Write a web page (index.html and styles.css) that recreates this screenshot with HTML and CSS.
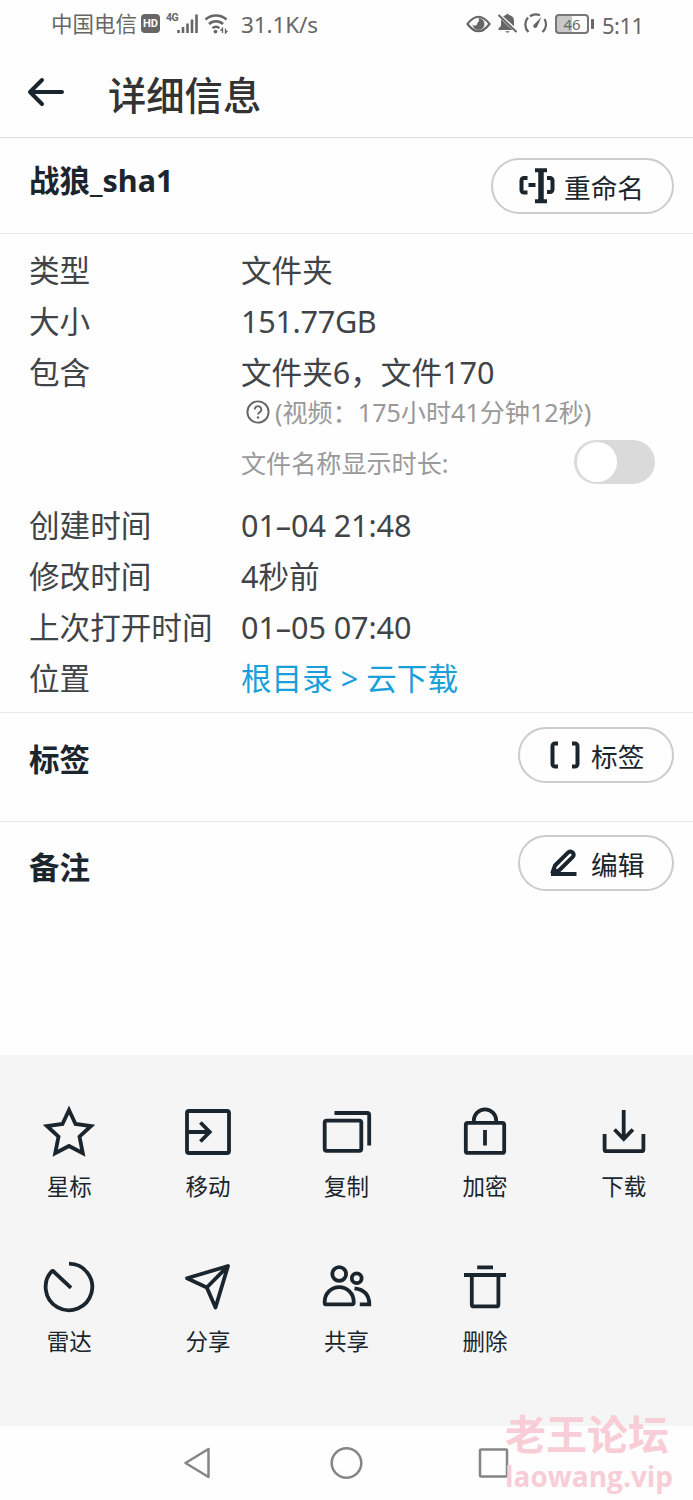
FILE: index.html
```html
<!DOCTYPE html>
<html lang="zh-CN">
<head>
<meta charset="utf-8">
<title>详细信息</title>
<link rel="stylesheet" href="styles.css">
</head>
<body>
<div class="screen">
  <div class="status">
    <span class="carrier">中国电信</span>
    <span class="hd">HD</span>
    <span class="net">4G</span>
    <svg class="signal" width="21" height="20" viewBox="0 0 21 20"><path d="M1.500 19v-3M6 19V13M10.500 19V9.500M15 19V5.500M19.500 19V0.500" stroke-width="2.600"/></svg>
    <svg class="wifi" width="25" height="20" viewBox="0 0 25 20"><path d="M1.500 5.500a15.500 15.500 0 0 1 21 0M5 10a10 10 0 0 1 14 0M8.500 14.200a5.200 5.200 0 0 1 7 0" stroke-width="2.500"/><circle class="solid" cx="11.500" cy="17.600" r="1.900"/><path d="M18.500 19v-4.500l-2 2.200M21.500 14.500V19l2-2.200" stroke-width="1.300"/></svg>
    <span class="speed">31.1K/s</span>
    <svg class="eye" width="25" height="18" viewBox="0 0 25 18"><path d="M1.500 9Q12.500-5.500 23.500 9 12.500 23.500 1.500 9z" stroke-width="2.200"/><path class="solid" d="M12.500 3a6 6 0 1 1-6 6 2.600 2.600 0 0 0 5-1.200A4 4 0 0 0 12.500 3z"/></svg>
    <svg class="bell" width="21" height="21" viewBox="0 0 21 21"><path class="solid" d="M6 3.200 9 2Q10.500-.5 12 2 17 3 17 8v5.300zM4 6.200 15.500 17H1.500v-1.500L4 12.800zM8 18.300h5Q10.500 21 8 18.300z"/><path d="M1.500 2 19.500 19" stroke-width="2"/></svg>
    <svg class="gauge" width="25" height="21" viewBox="0 0 25 21"><path d="M5 18.500A10.500 10.500 0 0 1 5 4.500M7 3.200A10.500 10.500 0 0 1 17 2.300M21.500 6a10.500 10.500 0 0 1-1.500 12.500M3 16l2.500 3M22 16l-2.500 3" stroke-width="2.300"/><path class="solid" d="M18.500 4 14 14a2 2 0 0 1-3.500-2z"/></svg>
    <span class="battery">46</span><i class="cap"></i>
    <span class="clock">5:11</span>
  </div>

  <header class="header">
    <svg class="ink" width="38" height="30" viewBox="0 0 38 30"><path d="M35 15H3M15 3 3 15l12 12" stroke-width="4" stroke-linecap="round" stroke-linejoin="round"/></svg>
    <h1 class="title">详细信息</h1>
  </header>

  <section class="section name">
    <h2 class="heading">战狼_sha1</h2>
    <button class="pill"><svg class="ink" width="38" height="38" viewBox="0 0 38 38"><path d="M16 3.200h12M16 34.300h12M9.500 18h7M8.500 11H5a2.500 2.500 0 0 0-2.500 2.500v9A2.500 2.500 0 0 0 5 25.500h3.500M28 11h3a2.500 2.500 0 0 1 2.500 2.500v9a2.500 2.500 0 0 1-2.500 2.500h-3" stroke-width="4"/><path d="M22 3v31" stroke-width="5.500"/></svg><span>重命名</span></button>
  </section>

  <section class="details">
    <div class="row"><span class="label">类型</span><span>文件夹</span></div>
    <div class="row"><span class="label">大小</span><span class="size">151.77GB</span></div>
    <div class="row"><span class="label">包含</span><span>文件夹6，文件170</span></div>
    <div class="extra">
      <div class="video"><svg width="26" height="26" viewBox="0 0 26 26"><circle cx="13" cy="13" r="10.600" stroke-width="1.900"/><path d="M9.700 10.500a3.300 3.300 0 1 1 5 2.800q-1.700 1-1.700 2.200" stroke-width="1.900"/><circle class="solid" cx="13" cy="18.500" r="1.200"/></svg><span class="duration">(视频：175小时41分钟12秒)</span></div>
      <div class="switchrow"><span>文件名称显示时长:</span><span class="toggle"><i class="knob"></i></span></div>
    </div>
    <div class="row"><span class="label">创建时间</span><span class="date">01–04 21:48</span></div>
    <div class="row"><span class="label">修改时间</span><span>4秒前</span></div>
    <div class="row"><span class="label">上次打开时间</span><span class="date">01–05 07:40</span></div>
    <div class="row"><span class="label">位置</span><span class="path">根目录 &gt; 云下载</span></div>
  </section>

  <section class="section tags">
    <h2 class="heading">标签</h2>
    <button class="pill small"><svg class="ink" width="32" height="30" viewBox="0 0 32 30"><path d="M10 3.500H7A2.500 2.500 0 0 0 4.500 6v18A2.500 2.500 0 0 0 7 26.500h3M24 3.500h3A2.500 2.500 0 0 1 29.500 6v18a2.500 2.500 0 0 1-2.500 2.500h-3" stroke-width="4"/></svg><span>标签</span></button>
  </section>
  <section class="section notes">
    <h2 class="heading">备注</h2>
    <button class="pill small"><svg class="ink" width="32" height="30" viewBox="0 0 32 30"><path d="M4.500 24.500 7 17.500 20.200 4.300c3.200-2.300 7 1.300 4.600 4.600L11 22.500zM3 26h25.500" stroke-width="4" stroke-linejoin="round"/></svg><span>编辑</span></button>
  </section>

  <section class="actions">
    <div class="action"><svg class="ink" viewBox="0 0 60 60"><path d="M30 8 36.500 22 52 24 40.500 34.700 43.800 51.300 30 44 16.200 51.300 19.500 34.700 8 24 23.500 22z"/></svg><span>星标</span></div>
    <div class="action"><svg class="ink" viewBox="0 0 60 60"><rect x="9" y="9" width="42" height="42" rx="2"/><path d="M9 30h22M22.400 20.500l9.300 9.500-9.300 9.500"/></svg><span>移动</span></div>
    <div class="action"><svg class="ink" viewBox="0 0 60 60"><rect x="8.700" y="18.600" width="36.600" height="30.200" rx="2"/><path d="M18.500 11h32.700a2 2 0 0 1 2 2v30.500"/></svg><span>复制</span></div>
    <div class="action"><svg class="ink" viewBox="0 0 60 60"><rect x="10.800" y="20.900" width="38.400" height="30" rx="2"/><path d="M18.800 20.500v-2a11.200 11.200 0 0 1 22.400 0v2M30 28v15.500"/></svg><span>加密</span></div>
    <div class="action"><svg class="ink" viewBox="0 0 60 60"><path d="M10.600 32v15.200a2 2 0 0 0 2 2h34.800a2 2 0 0 0 2-2V32M29.700 8v29M20.500 27.500l9.200 9.500 9.200-9.500"/></svg><span>下载</span></div>
    <div class="action"><svg class="ink" viewBox="0 0 60 60"><path d="M30 6.700A23.300 23.300 0 1 1 13.500 13.500L32 30.800" stroke-linejoin="bevel"/></svg><span>雷达</span></div>
    <div class="action"><svg class="ink" viewBox="0 0 60 60"><path d="M50 9 9 21.300 28.800 30.500 37.500 50.500zL28.800 30.500" stroke-linejoin="round"/></svg><span>分享</span></div>
    <div class="action"><svg class="ink" viewBox="0 0 60 60"><circle cx="23.200" cy="17" r="6.900"/><circle cx="40.700" cy="21.200" r="4.900"/><path d="M8.700 44.600a14.500 14.500 0 0 1 29 0v1.300a1.500 1.500 0 0 1-1.500 1.500h-26a1.500 1.500 0 0 1-1.500-1.500zM38.500 31.300Q53.300 33 53.300 47.400H43.800"/></svg><span>共享</span></div>
    <div class="action"><svg class="ink" viewBox="0 0 60 60"><path d="M22.200 10.300H38M9 18h42M16.800 18v29.400a2 2 0 0 0 2 2h22.600a2 2 0 0 0 2-2V18"/></svg><span>删除</span></div>
  </section>

  <nav class="nav">
    <svg viewBox="0 0 40 40"><path d="M6.500 20 29.500 6v28z"/></svg>
    <svg viewBox="0 0 40 40"><circle cx="20.500" cy="20" r="14.800"/></svg>
    <svg viewBox="0 0 40 40"><rect x="7" y="6.500" width="27" height="27" rx="1"/></svg>
  </nav>
  <div class="watermark"><b class="mark-name">老王论坛</b><b class="mark-site">laowang.vip</b></div>
</div>
</body>
</html>
```
FILE: styles.css
```css
* { box-sizing: border-box; }
body { margin: 0; background: #fefefe; font-family: "Noto Sans", "Noto Sans CJK SC", sans-serif; color: #404447; }
svg { fill: none; stroke: #666; flex: none; display: block; }
.ink { stroke: #1b252d; }
.solid { fill: #666; stroke: none; }
.screen { position: relative; width: 693px; height: 1500px; overflow: hidden; display: flex; flex-direction: column; white-space: nowrap; }

.status { height: 47px; padding-left: 51px; display: flex; align-items: center; color: #666; line-height: 46px; }
.carrier { width: 90px; padding-top: 1px; font-size: 21.500px; }
.hd { width: 19px; height: 19px; border-radius: 4px; background: #666; color: #fff; font: 700 11px/19px "Roboto", sans-serif; text-align: center; }
.net { width: 12px; margin: -11px 0 0 6px; font: 700 10.500px/12px "Roboto", sans-serif; letter-spacing: -0.500px; }
.signal { margin-left: -1px; }
.wifi { margin-left: 6px; }
.speed { width: 225px; margin-left: 12px; padding-top: 2px; font-size: 22.500px; letter-spacing: -0.100px; }
.eye { flex: none; margin-right: 6px; }
.bell { margin-right: 5px; }
.gauge { margin-right: 7px; }
.battery { width: 34px; height: 20px; border: 2px solid #777; border-radius: 4px; background: linear-gradient(90deg, #c8c8c8 50%, transparent 50%); font-size: 15px; line-height: 16px; text-align: center; }
.cap { width: 3px; height: 10px; margin: 0 8px 0 2px; border-radius: 1px; background: #666; }
.clock { padding-top: 2px; font-size: 22px; letter-spacing: -0.500px; }

.header { height: 91px; padding: 4px 0 0 27px; display: flex; align-items: center; border-bottom: 1.500px solid #dcdcdc; }
.header svg { margin-top: -4px; }
.title { margin: 2px 0 0 43px; font-size: 38.300px; line-height: 50px; font-weight: 500; color: #333; }

.section { padding: 0 19px 0 29px; display: flex; justify-content: space-between; border-bottom: 1px solid #e9e9e9; }
.heading { margin: 0; font-size: 30.500px; line-height: 40px; font-weight: 700; color: #1b252d; }
.pill { width: 183px; height: 56px; padding: 0 0 0 26px; display: flex; align-items: center; gap: 7px; border: 2px solid #ccc; border-radius: 28px; background: #fefefe; font: 26.700px/50px "Noto Sans", "Noto Sans CJK SC", sans-serif; color: #1b252d; }
.pill span { padding-top: 3px; }
.small { width: 156px; padding-left: 28px; gap: 11px; }
.name { height: 96px; padding-top: 20px; }
.name .heading { margin-top: 2px; }
.tags { height: 109px; padding-top: 14px; }
.tags .heading, .notes .heading { margin-top: 12px; }
.notes { height: 233px; padding-top: 13px; border: 0; }

.details { height: 479px; padding: 11px 0 0 29px; border-bottom: 1px solid #e9e9e9; font-size: 30.600px; }
.row { height: 51.200px; line-height: 51.200px; display: grid; grid-template-columns: 212px 1fr; }
.size { letter-spacing: -0.300px; }
.date { letter-spacing: -0.100px; }
.path { color: #199fda; }
.extra { height: 102px; padding-left: 212px; font-size: 25.100px; color: #999; }
.video { height: 28px; margin-top: -1px; display: flex; align-items: center; padding-left: 4px; gap: 4px; line-height: 28px; }
.switchrow { height: 44px; margin-top: 14px; padding-right: 38px; display: flex; justify-content: space-between; line-height: 46px; }
.toggle { width: 81px; height: 44px; padding: 2px 3px; border-radius: 22px; background: #dadada; }
.knob { display: block; width: 40px; height: 40px; border-radius: 50%; background: #fff; }

.actions { height: 371px; padding-top: 47px; display: grid; grid-template-columns: repeat(5, 1fr); grid-auto-rows: 154.700px; background: #f5f5f5; color: #1b252d; }
.action { display: flex; flex-direction: column; align-items: center; font-size: 22.500px; line-height: 34px; gap: 8px; }
.action svg { width: 60px; height: 60px; stroke-width: 3.800px; }

.nav { height: 74px; padding: 0 180px 0 179px; display: flex; justify-content: space-between; align-items: center; }
.nav svg { width: 40px; height: 40px; stroke: #858585; stroke-width: 2.500px; stroke-linejoin: round; }

.watermark { position: absolute; left: 505px; top: 1411px; display: flex; flex-direction: column; color: #f8cdd5; }
.mark-name { font: 700 41px/42px "Noto Sans CJK SC", sans-serif; }
.mark-site { padding-top: 4px; font: 700 28px/38px "Open Sans", sans-serif; }
```
